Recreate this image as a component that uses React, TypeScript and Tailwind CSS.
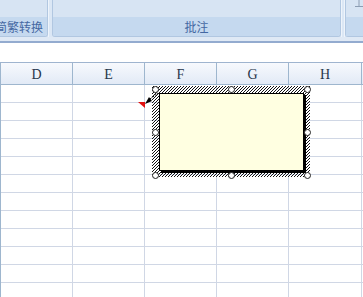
import React from 'react'

const columns = [
	{ label: 'D', width: 'w-[72px]' },
	{ label: 'E', width: 'w-[72px]' },
	{ label: 'F', width: 'w-[72px]' },
	{ label: 'G', width: 'w-[72px]' },
	{ label: 'H', width: 'w-[73px]' },
]

const rows = Array.from({ length: 12 }, (_, i) => i)

// handle centers, relative to the comment frame
const handles = [
	[3, 4],
	[79, 4],
	[155, 4],
	[3, 47],
	[155, 47],
	[3, 90],
	[79, 90],
	[155, 90],
]

const CommentBox = () => {
	return (
		<div className="absolute left-[152px] top-[85px] w-[159px] h-[93px]">
			<svg className="absolute inset-0" width="159" height="93">
				<defs>
					<pattern id="hatch" patternUnits="userSpaceOnUse" width="3" height="3">
						<path d="M-1,1 L1,-1 M0,3 L3,0 M2,4 L4,2" stroke="#111" strokeWidth="1" />
					</pattern>
				</defs>
				<rect x="0" y="1" width="158" height="91" fill="url(#hatch)" />
			</svg>
			<div className="absolute left-[7px] top-[8px] w-[145px] h-[78px] bg-[#ffffe1] border border-black shadow-[2px_2px_0_#000]" />
			{handles.map(([x, y], i) => (
				<div
					key={i}
					className="absolute w-[7px] h-[7px] rounded-full bg-white border border-[#222]"
					style={{ left: x - 3, top: y - 3 }}
				/>
			))}
		</div>
	)
}

const Indicator = () => (
	<svg className="absolute left-[136px] top-[90px]" width="26" height="22">
		<polygon points="2,12 9,12 9,18" fill="#e01010" />
		<line x1="14" y1="9" x2="22" y2="3" stroke="#000" strokeWidth="1" strokeDasharray="2 1" />
		<polygon points="9,14 16,11 13,7" fill="#000" />
	</svg>
)

export default function App() {
	return (
		<div className="relative w-[363px] h-[297px] overflow-hidden bg-white font-['Noto_Sans_CJK_SC',sans-serif]">
			{/* ribbon */}
			<div className="flex h-[37px] bg-[#dbe7f5]">
				<div className="w-[48px] flex flex-col overflow-hidden border-r border-b border-[#b1c7e1] rounded-br-[3px]">
					<div className="h-[17px] bg-[#d7e4f3]" />
					<div className="flex-1 flex items-center bg-[#c5d9ef] whitespace-nowrap text-[12px] leading-none text-[#4468a2]">
						<span className="-ml-[5px]">简繁转换</span>
					</div>
				</div>
				<div className="w-[4px] border-l border-[#eef4fb]" />
				<div className="w-[289px] flex flex-col overflow-hidden border-x border-b border-[#b1c7e1] rounded-b-[3px]">
					<div className="h-[17px] bg-[#d7e4f3]" />
					<div className="flex-1 flex items-center justify-center bg-[#c5d9ef] text-[12px] leading-none text-[#4468a2]">
						批注
					</div>
				</div>
				<div className="w-[4px] border-x border-[#eef4fb]" />
				<div className="flex-1 flex flex-col border-l border-b border-[#b1c7e1] rounded-bl-[3px]">
					<div className="h-[17px] bg-[#d7e4f3] flex justify-end">
						<svg width="10" height="8" className="mr-[-1px]">
							<path d="M5,0 V6 M1,6.5 H10" stroke="#8c9db3" strokeWidth="1" />
						</svg>
					</div>
					<div className="flex-1 bg-[#c5d9ef]" />
				</div>
			</div>
			<div className="h-[4px] bg-[#dfe9f5]" />
			<div className="h-[2px] bg-[#93abcf]" />
			<div className="h-[19px] bg-white" />
			<div className="h-px bg-[#9fb4cf]" />

			{/* sheet */}
			<div className="border-l border-[#9eb6ce]">
				<div className="flex h-[22px] border-b border-[#9eb6ce] bg-gradient-to-b from-[#f7f9fd] to-[#e2eaf6]">
					{columns.map((c) => (
						<div
							key={c.label}
							className={`${c.width} shrink-0 flex items-center justify-center pt-px border-r border-[#9eb6ce] font-['Liberation_Serif',serif] text-[14px] text-[#26364a]`}
						>
							{c.label}
						</div>
					))}
				</div>
				{rows.map((r) => (
					<div key={r} className="flex h-[18px] border-b border-[#d0d7e5]">
						{columns.map((c) => (
							<div key={c.label} className={`${c.width} shrink-0 border-r border-[#d0d7e5]`} />
						))}
					</div>
				))}
			</div>

			<Indicator />
			<CommentBox />
		</div>
	)
}
